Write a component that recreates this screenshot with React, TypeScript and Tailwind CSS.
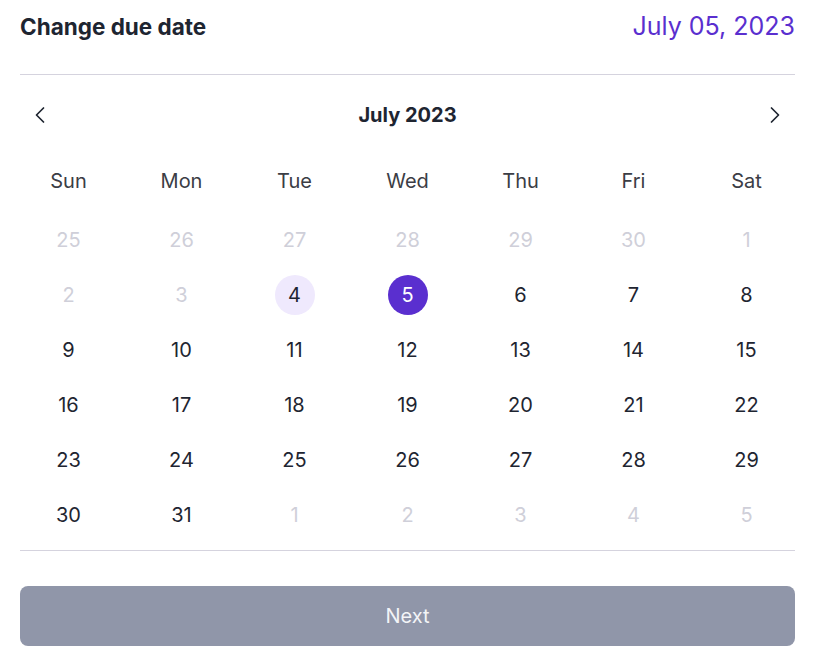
import { ChevronLeft, ChevronRight } from 'lucide-react';

type Day = { n: number; muted?: boolean };

const weekdays = ['Sun', 'Mon', 'Tue', 'Wed', 'Thu', 'Fri', 'Sat'];

const days: Day[] = [
  ...[25, 26, 27, 28, 29, 30].map((n) => ({ n, muted: true })),
  ...Array.from({ length: 31 }, (_, i) => ({ n: i + 1 })),
  ...[1, 2, 3, 4, 5].map((n) => ({ n, muted: true })),
];

// the first row of the month is shown muted up to the 3rd (past dates)
const isPast = (d: Day) => !d.muted && d.n < 4;

export default function App() {
  return (
    <div className="w-[815px] h-[658px] bg-white px-5 font-['Inter',sans-serif] text-[#1e2531]">
      <div className="h-[54px] flex items-center justify-between">
        <h1 className="text-[22.5px] font-bold">Change due date</h1>
        <span className="text-[25px] text-[#5a2fcf]">July 05, 2023</span>
      </div>

      <div className="mt-5 border-t border-[#d5d3de]" />

      <div className="mt-5 h-10 flex items-center justify-between px-[6px]">
        <button aria-label="Previous month" className="text-[#1e2531]">
          <ChevronLeft size={28} strokeWidth={1.5} />
        </button>
        <div className="text-[20px] font-bold">July 2023</div>
        <button aria-label="Next month" className="text-[#1e2531]">
          <ChevronRight size={28} strokeWidth={1.5} />
        </button>
      </div>

      <div className="mt-[26px] grid grid-cols-7 gap-x-4 h-10 items-center">
        {weekdays.map((w) => (
          <div key={w} className="text-center text-[20px] text-[#3b3d45]">
            {w}
          </div>
        ))}
      </div>

      <div className="mt-[19px] grid grid-cols-7 gap-x-4 gap-y-[15px]">
        {days.map((d, i) => {
          const selected = !d.muted && d.n === 5;
          const today = !d.muted && d.n === 4;
          const muted = d.muted || isPast(d);
          return (
            <div key={i} className="h-10 flex items-center justify-center">
              <span
                className={
                  'w-10 h-10 rounded-full flex items-center justify-center text-[20px] ' +
                  (selected
                    ? 'bg-[#5a2fcf] text-white'
                    : today
                    ? 'bg-[#efe9fd] text-[#1e2531]'
                    : muted
                    ? 'text-[#cfcfd9]'
                    : 'text-[#1e2531]')
                }
              >
                {d.n}
              </span>
            </div>
          );
        })}
      </div>

      <div className="mt-[15px] border-t border-[#d5d3de]" />

      <button className="mt-[35px] w-full h-[60px] rounded-lg bg-[#9096a9] text-[20px] text-[#f3f4f7]">
        Next
      </button>
    </div>
  );
}
